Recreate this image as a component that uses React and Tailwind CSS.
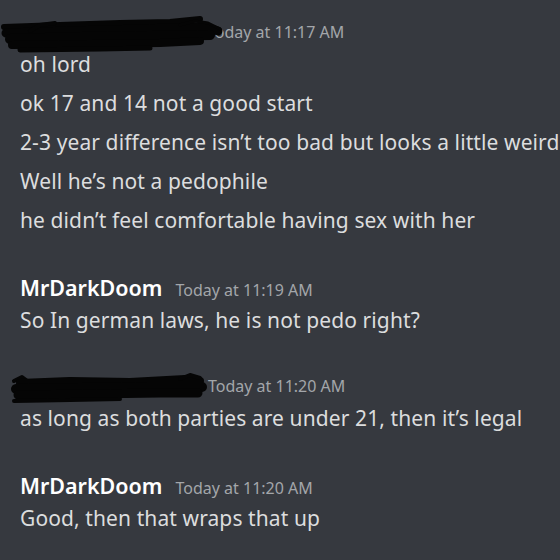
import React from "react";

const font = { fontFamily: '"Noto Sans", "Open Sans", sans-serif' };

function Scribble1() {
  return (
    <svg className="absolute left-0 top-[-6px]" width="230" height="44" viewBox="0 0 230 44">
      <g fill="none" stroke="#050505" strokeLinecap="round" strokeLinejoin="round">
        <path d="M4 14 L60 12 L120 10 L170 9 L200 6" strokeWidth="6" />
        <path d="M6 20 L70 18 L140 16 L205 14 L218 18" strokeWidth="9" />
        <path d="M10 26 L80 24 L150 23 L210 22" strokeWidth="10" />
        <path d="M12 32 L90 31 L160 30 L200 28" strokeWidth="8" />
        <path d="M20 37 L100 36 L150 35" strokeWidth="5" />
        <path d="M30 18 L40 12 L55 10" strokeWidth="4" />
        <path d="M180 12 L195 8 L208 10 L220 16" strokeWidth="3" />
      </g>
    </svg>
  );
}

function Scribble2() {
  return (
    <svg className="absolute left-0 top-[-4px]" width="215" height="40" viewBox="0 0 215 40">
      <g fill="none" stroke="#050505" strokeLinecap="round" strokeLinejoin="round">
        <path d="M14 12 L22 8 L30 14" strokeWidth="4" />
        <path d="M20 14 L70 12 L130 13 L185 10 L200 12" strokeWidth="8" />
        <path d="M16 20 L80 19 L150 18 L202 18" strokeWidth="10" />
        <path d="M18 26 L90 25 L160 24 L198 24" strokeWidth="9" />
        <path d="M14 32 L70 31 L120 30" strokeWidth="4" />
        <path d="M180 10 L190 6 L200 9" strokeWidth="4" />
      </g>
    </svg>
  );
}

function Line({ children }) {
  return (
    <div className="h-[39px] leading-[39px] whitespace-nowrap text-[21px] tracking-[0.1px] text-[#dcddde]">
      {children}
    </div>
  );
}

function Header({ name, time }) {
  return (
    <div className="h-[26px] flex items-baseline gap-[13px] whitespace-nowrap">
      <span className="text-[21.5px] font-semibold text-white leading-[26px]">{name}</span>
      <span className="text-[16px] text-[#a3a6aa] leading-[26px]">{time}</span>
    </div>
  );
}

function HiddenHeader({ time, indent, children }) {
  return (
    <div className="relative h-[26px] whitespace-nowrap">
      <div className="leading-[26px] text-[16px] text-[#a3a6aa]" style={{ paddingLeft: indent }}>
        {time}
      </div>
      {children}
    </div>
  );
}

export default function App() {
  return (
    <div className="w-[560px] h-[560px] overflow-hidden bg-[#36393f] pl-[20px] pt-[19px]" style={font}>
      <div>
        <HiddenHeader time="Today at 11:17 AM" indent="187px">
          <div className="absolute left-[-20px] top-0">
            <Scribble1 />
          </div>
        </HiddenHeader>
        <Line>oh lord</Line>
        <Line>ok 17 and 14 not a good start</Line>
        <Line>2-3 year difference isn’t too bad but looks a little weird</Line>
        <Line>Well he’s not a pedophile</Line>
        <Line>he didn’t feel comfortable having sex with her</Line>
      </div>
      <div className="mt-[35px]">
        <Header name="MrDarkDoom" time="Today at 11:19 AM" />
        <Line>So In german laws, he is not pedo right?</Line>
      </div>
      <div className="mt-[33px]">
        <HiddenHeader time="Today at 11:20 AM" indent="188px">
          <div className="absolute left-[-20px] top-0">
            <Scribble2 />
          </div>
        </HiddenHeader>
        <Line>as long as both parties are under 21, then it’s legal</Line>
      </div>
      <div className="mt-[35px]">
        <Header name="MrDarkDoom" time="Today at 11:20 AM" />
        <Line>Good, then that wraps that up</Line>
      </div>
    </div>
  );
}
